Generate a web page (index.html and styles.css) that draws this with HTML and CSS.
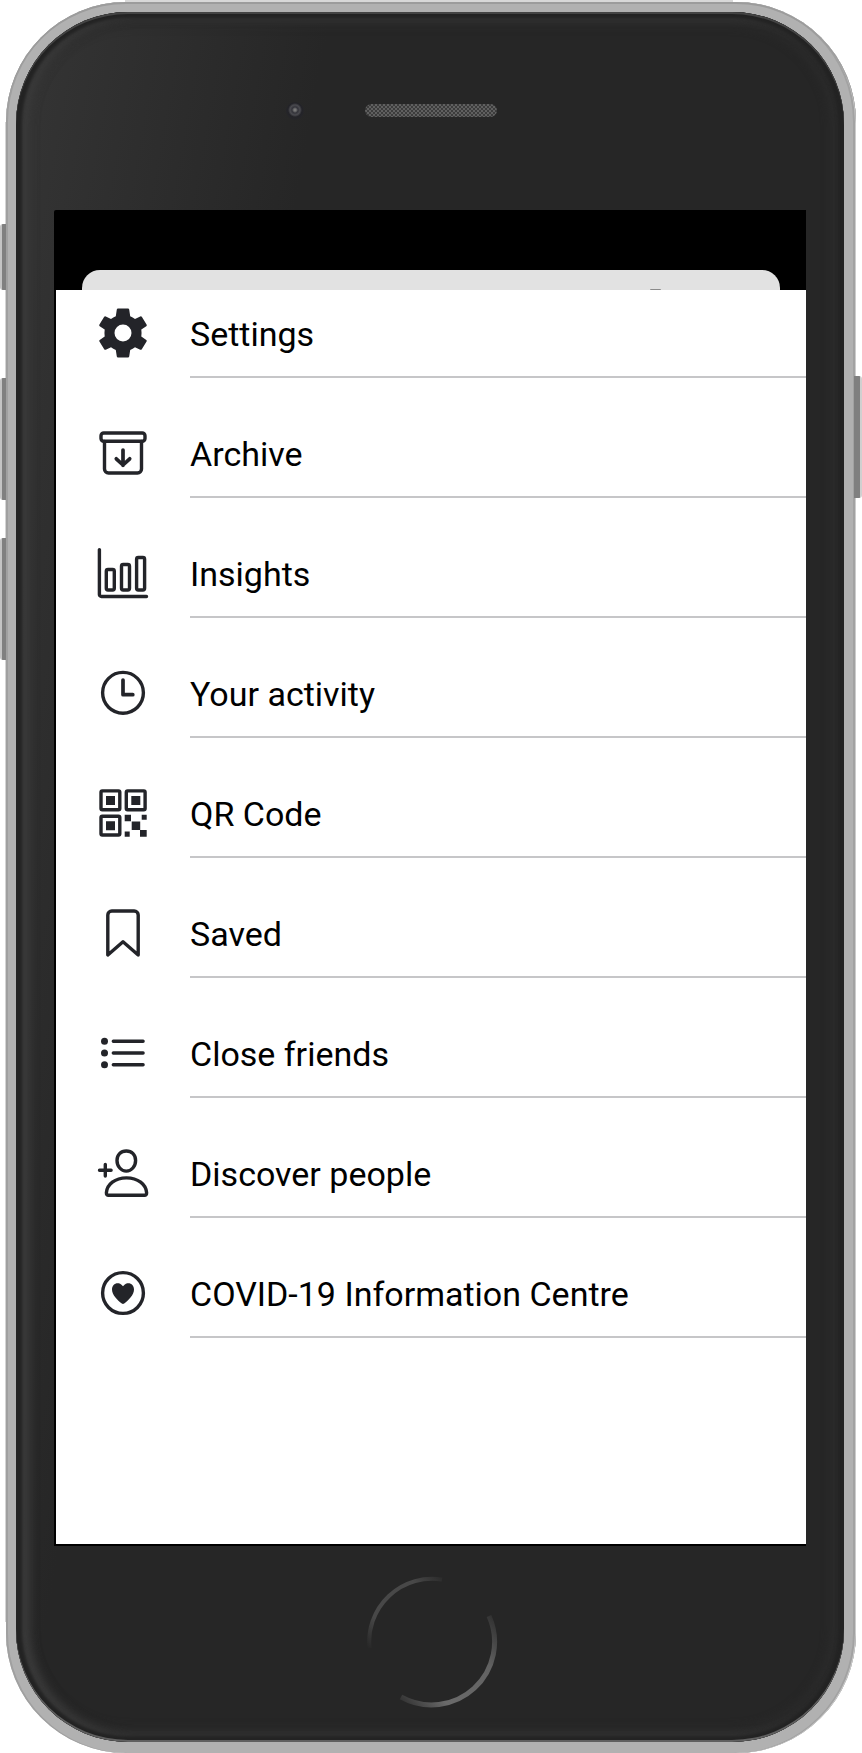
FILE: index.html
```html
<!DOCTYPE html>
<html lang="en">
<head>
<meta charset="utf-8">
<title>Menu</title>
<link rel="stylesheet" href="styles.css">
</head>
<body>
<div class="device">
  <span class="button button-mute"></span>
  <span class="button button-up"></span>
  <span class="button button-down"></span>
  <span class="button button-power"></span>
  <div class="phone">
    <div class="face">
      <header class="bezel-top">
        <span class="camera"></span>
        <span class="speaker"></span>
      </header>
      <main class="screen">
        <div class="backdrop"><div class="card"><span class="handle"></span></div></div>
        <div class="sheet">
          <ul class="menu">
            <li class="item">
              <svg class="icon" viewBox="0 0 60 60"><path class="fill" fill-rule="evenodd" d="M25 5.5H35Q36 5.5 36.2 6.5L37.2 13.2Q39.8 14.2 42 15.9L47.2 13.4Q48.2 13 48.8 13.8L53.7 21.8Q54.1 22.7 53.3 23.3L48.3 26.6Q48.8 30 48.3 33.6L53.3 36.9Q54.1 37.5 53.7 38.3L48.8 46.3Q48.2 47.1 47.2 46.7L42 44.2Q39.8 45.9 37.2 46.9L36.2 53.5Q36 54.5 35 54.5H25Q24 54.5 23.8 53.5L22.8 46.9Q20.2 45.9 18 44.2L12.8 46.7Q11.8 47.1 11.2 46.3L6.3 38.3Q5.9 37.5 6.7 36.9L11.7 33.6Q11.2 30 11.7 26.6L6.7 23.3Q5.9 22.7 6.3 21.8L11.2 13.8Q11.8 13 12.8 13.4L18 15.9Q20.2 14.2 22.8 13.2L23.8 6.5Q24 5.5 25 5.5ZM30 21.500A8.500 8.500 0 1 0 30 38.500A8.500 8.500 0 1 0 30 21.500Z"/></svg>
              <span class="label">Settings</span>
            </li>
            <li class="item">
              <svg class="icon" viewBox="0 0 60 60"><rect x="8" y="10" width="44" height="8.300" rx="2.800"/><path d="M11.500 18.500V46a4 4 0 0 0 4 4h29a4 4 0 0 0 4-4V18.500"/><path class="bold" d="M30 27v15.300M23.300 35.800l6.700 6.200 6.700-6.200"/></svg>
              <span class="label">Archive</span>
            </li>
            <li class="item">
              <svg class="icon" viewBox="0 0 60 60"><path d="M6.400 6.600V51.500a2 2 0 0 0 2 2H53.500"/><rect x="13.300" y="26.500" width="8" height="20.500" rx="1.700"/><rect x="28.500" y="21.500" width="8" height="25.500" rx="1.700"/><rect x="43.600" y="14.500" width="8" height="32.500" rx="1.700"/></svg>
              <span class="label">Insights</span>
            </li>
            <li class="item">
              <svg class="icon" viewBox="0 0 60 60"><circle cx="30" cy="29.800" r="20.400"/><path class="bold" d="M30 17v14.700h9.800"/></svg>
              <span class="label">Your activity</span>
            </li>
            <li class="item">
              <svg class="icon" viewBox="0 0 60 60"><rect x="8" y="7.900" width="18.800" height="18.800" rx="1.300"/><rect x="33.300" y="7.900" width="18.800" height="18.800" rx="1.300"/><rect x="8" y="33.200" width="18.800" height="18.800" rx="1.300"/><path class="fill" d="M13 13h9v9h-9zM38.300 13h9v9h-9zM13 38.300h9v9h-9zM31.700 31.700H38v6.500H31.700zM48.700 31.700h5v5h-5zM38.700 38.500h8.500V47h-8.500zM47 47h6.700v6.700H47zM31.700 48.500h5v5.200h-5z"/></svg>
              <span class="label">QR Code</span>
            </li>
            <li class="item">
              <svg class="icon" viewBox="0 0 60 60"><path d="M14.800 52V12a4 4 0 0 1 4-4h22.400a4 4 0 0 1 4 4V52L30 38.700Z"/></svg>
              <span class="label">Saved</span>
            </li>
            <li class="item">
              <svg class="icon" viewBox="0 0 60 60"><circle class="fill" cx="11.500" cy="18.200" r="3.500"/><circle class="fill" cx="11.500" cy="30" r="3.500"/><circle class="fill" cx="11.500" cy="41.800" r="3.500"/><path d="M20.300 18.200h29.800M20.300 30h29.800M20.300 41.800h29.800"/></svg>
              <span class="label">Close friends</span>
            </li>
            <li class="item">
              <svg class="icon" viewBox="0 0 60 60"><path d="M33.300 8c5.600 0 9.300 3.900 9.300 9.400 0 6-4.200 10.700-9.300 10.700s-9.300-4.700-9.300-10.700C24 11.900 27.700 8 33.300 8ZM6.500 27.300H18.100M12.300 21.500v11.600M15.500 52.200q-2.200 0-2.100-2.500C14 41.500 22 34.900 33.500 34.900S53 41.500 53.600 49.700q.1 2.500-2.100 2.500Z"/></svg>
              <span class="label">Discover people</span>
            </li>
            <li class="item">
              <svg class="icon" viewBox="0 0 60 60"><circle cx="30" cy="30" r="20.400"/><path class="fill" d="M30 23.200C32 20.700 34 20.300 35.300 20.300c3.300 0 5.700 2.600 5.700 6.200 0 5.500-5.500 10.800-9.800 14q-1.200.9-2.400 0C24.500 37.300 19 32 19 26.500c0-3.600 2.400-6.200 5.700-6.200 1.300 0 3.300.4 5.300 2.900Z"/></svg>
              <span class="label">COVID-19 Information Centre</span>
            </li>
          </ul>
        </div>
      </main>
      <footer class="bezel-bottom">
        <svg class="home" viewBox="0 0 132 132">
          <defs>
            <linearGradient id="upper" gradientUnits="userSpaceOnUse" x1="4" y1="75" x2="80" y2="0">
              <stop offset="0" stop-color="#262626"/><stop offset=".25" stop-color="#484848"/><stop offset=".75" stop-color="#484848"/><stop offset="1" stop-color="#262626"/>
            </linearGradient>
            <linearGradient id="lower" gradientUnits="userSpaceOnUse" x1="126" y1="38" x2="34" y2="124">
              <stop offset="0" stop-color="#303030"/><stop offset=".3" stop-color="#626262"/><stop offset=".75" stop-color="#6a6a6a"/><stop offset="1" stop-color="#333"/>
            </linearGradient>
          </defs>
          <path stroke="url(#upper)" d="M3.500 72A63 63 0 0 1 76 3.500"/>
          <path stroke="url(#lower)" stroke-width="5" d="M123 40A63 63 0 0 1 35 121"/>
        </svg>
      </footer>
    </div>
  </div>
</div>
</body>
</html>
```
FILE: styles.css
```css
* { box-sizing: border-box; }

body {
  margin: 0;
  background: #fff;
  font-family: Roboto, "Liberation Sans", sans-serif;
}

.device {
  position: relative;
  width: 862px;
  height: 1753px;
  padding: 2px 6px 0;
  overflow: hidden;
  background:
    linear-gradient(#d8d8d8, #d8d8d8) 125px 0 / 608px 2px no-repeat,
    linear-gradient(#d4d4d4, #d4d4d4) 5px 122px / 1px 1500px no-repeat,
    #fff;
}

.button {
  position: absolute;
  left: 0;
  width: 7px;
  border-radius: 3px 0 0 3px;
  background: linear-gradient(90deg, #c4c4c4 0 2px, #808080 2px);
}
.button-mute { top: 224px; height: 66px; }
.button-up { top: 378px; height: 122px; }
.button-down { top: 538px; height: 122px; }
.button-power {
  left: auto;
  right: 0;
  z-index: 1;
  top: 376px;
  height: 122px;
  width: 8px;
  border-radius: 0 3px 3px 0;
  background: linear-gradient(90deg, #808080 0 6px, #d0d0d0 6px);
}

.phone {
  position: relative;
  height: 1751px;
  padding: 10px 12px 11px 10px;
  border-radius: 120px;
  background: #b1b1b1;
  box-shadow: inset 0 2px 0 #9c9c9c, inset 2px 0 0 #a0a0a0, inset -1px 0 0 #ccc, inset -3px 0 0 #a2a2a2;
}

.face {
  display: flex;
  flex-direction: column;
  height: 1730px;
  padding: 0 38px;
  border-radius: 112px;
  background: linear-gradient(100deg, #353535 0, #303030 100px, #262626 310px);
  box-shadow: inset 0 2px 0 #444, inset 0 -2px 0 #606060, inset 0 0 3px 6px #232323, inset 8px 0 10px 6px rgba(75, 75, 75, .5), inset 0 0 8px 14px #2b2b2b;
}

.bezel-top {
  display: flex;
  align-items: center;
  gap: 61px;
  height: 198px;
  padding: 0 0 0 232px;
}
.camera {
  width: 18px;
  height: 18px;
  border-radius: 50%;
  background: radial-gradient(circle at 9px 8px, #777 0 1px, #33333a 3px, #4a4a4f 5px, #232328 7px, #252529 9px);
}
.speaker {
  width: 132px;
  height: 13px;
  margin-bottom: 2px;
  border-radius: 7px;
  background: repeating-conic-gradient(#606060 0 25%, #3c3c3c 0 50%) 0 0 / 4px 4px;
}

.screen {
  display: flex;
  flex-direction: column;
  width: 752px;
  height: 1336px;
  border-radius: 2px 0 0 0;
  background: #000;
}
.backdrop {
  display: flex;
  align-items: flex-end;
  height: 80px;
  padding: 0 26px 0 28px;
}
.card {
  display: flex;
  flex: 1;
  align-items: flex-end;
  justify-content: flex-end;
  height: 20px;
  padding-right: 119px;
  border-radius: 18px 18px 0 0;
  background: #e2e2e2;
}
.handle {
  width: 11px;
  height: 1px;
  border-radius: 5px 5px 0 0;
  background: #8b8b8b;
}
.sheet {
  height: 1254px;
  margin-left: 2px;
  overflow: hidden;
  background: #fff;
}

.menu {
  margin: -32px 0 0;
  padding: 0;
  list-style: none;
}
.item {
  display: flex;
  height: 120px;
  padding-left: 37px;
}
.icon {
  flex: none;
  width: 60px;
  height: 60px;
  margin: 45px 37px 0 0;
  fill: none;
  stroke: #232429;
  stroke-width: 3.4;
  stroke-linecap: round;
  stroke-linejoin: round;
}
.icon .bold { stroke-width: 3.7; }
.icon .fill { fill: #232429; stroke: none; }
.label {
  flex: 1;
  padding-top: 56px;
  border-bottom: 2px solid #c6c6c8;
  color: #000;
  font-size: 34px;
  line-height: 40px;
  white-space: nowrap;
}

.bezel-bottom {
  display: flex;
  justify-content: center;
  padding: 30px 0 0 3px;
}
.home {
  width: 132px;
  height: 132px;
  fill: none;
  stroke-width: 4;
}
```
